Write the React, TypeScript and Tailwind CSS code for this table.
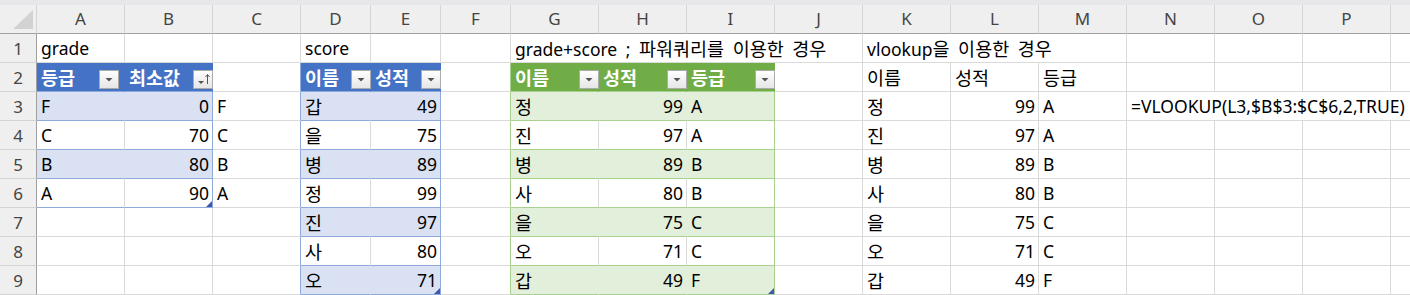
import React from 'react';

type Tbl = { c0: number; c1: number; r0: number; r1: number; green: boolean };

const COLS = ['A', 'B', 'C', 'D', 'E', 'F', 'G', 'H', 'I', 'J', 'K', 'L', 'M', 'N', 'O', 'P', 'Q'];
const WIDE: Record<string, string> = { D: 'w-[70px]', E: 'w-[70px]', F: 'w-[70px]' };

const TABLES: Tbl[] = [
  { c0: 0, c1: 1, r0: 2, r1: 6, green: false },
  { c0: 3, c1: 4, r0: 2, r1: 9, green: false },
  { c0: 6, c1: 8, r0: 2, r1: 9, green: true },
];

const names = ['정', '진', '병', '사', '을', '오', '갑'];
const scores = ['99', '97', '89', '80', '75', '71', '49'];
const grades = ['A', 'A', 'B', 'B', 'C', 'C', 'F'];

const DATA: Record<string, string> = {
  A1: 'grade',
  D1: 'score',
  G1: 'grade+score ; 파워쿼리를 이용한 경우',
  K1: 'vlookup을 이용한 경우',
  A2: '등급',
  B2: '최소값',
  D2: '이름',
  E2: '성적',
  G2: '이름',
  H2: '성적',
  I2: '등급',
  K2: '이름',
  L2: '성적',
  M2: '등급',
  A3: 'F', B3: '0', C3: 'F',
  A4: 'C', B4: '70', C4: 'C',
  A5: 'B', B5: '80', C5: 'B',
  A6: 'A', B6: '90', C6: 'A',
  N3: '=VLOOKUP(L3,$B$3:$C$6,2,TRUE)',
};
['갑', '을', '병', '정', '진', '사', '오'].forEach((n, i) => {
  DATA['D' + (i + 3)] = n;
  DATA['E' + (i + 3)] = ['49', '75', '89', '99', '97', '80', '71'][i];
});
names.forEach((n, i) => {
  DATA['G' + (i + 3)] = n;
  DATA['H' + (i + 3)] = scores[i];
  DATA['I' + (i + 3)] = grades[i];
  DATA['K' + (i + 3)] = n;
  DATA['L' + (i + 3)] = scores[i];
  DATA['M' + (i + 3)] = grades[i];
});

// text that spills over: first column gets the width of the span
const SPAN: Record<string, { w: string; skip: number }> = {
  G1: { w: 'w-[352px]', skip: 3 },
  K1: { w: 'w-[264px]', skip: 2 },
  N3: { w: 'w-[352px]', skip: 3 },
};

const findTable = (r: number, c: number) =>
  TABLES.find((t) => r >= t.r0 && r <= t.r1 && c >= t.c0 && c <= t.c1);

// hangul looks a bit larger than latin in the sheet font
const renderText = (s: string) => (
  <span>
    {s.split(/([가-힣]+)/).map((part, i) =>
      /[가-힣]/.test(part) ? (
        <span key={i} className="text-[18.5px]">
          {part}
        </span>
      ) : (
        part
      ),
    )}
  </span>
);

const FilterBtn = ({ sort, shift }: { sort?: boolean; shift?: boolean }) => (
  <div
    className={
      'absolute top-[7px] h-[19px] w-[20px] border border-[#ababab] bg-gradient-to-b from-white to-[#e6e6e6] ' +
      (shift ? 'right-[5px]' : 'right-[-1px]')
    }
  >
    <svg width="18" height="17" viewBox="0 0 18 17" className="block">
      {sort ? (
        <>
          <polygon points="4,10 10,10 7,13" fill="#555" />
          <path d="M13.5 4 V13" stroke="#555" strokeWidth="1" />
          <path d="M11.5 6 L13.5 3.5 L15.5 6" stroke="#555" strokeWidth="1" fill="none" />
        </>
      ) : (
        <polygon points="5.5,7 12.5,7 9,10.5" fill="#555" />
      )}
    </svg>
  </div>
);

const Handle = () => (
  <svg width="6" height="6" viewBox="0 0 6 6" className="absolute bottom-0 right-0">
    <polygon points="6,0 6,6 0,6" fill="#3f57b0" />
  </svg>
);

const Cell = ({ r, c }: { r: number; c: number }) => {
  const col = COLS[c];
  const key = col + r;
  const text = DATA[key];
  const span = SPAN[key];
  const t = findTable(r, c);
  const nextT = findTable(r, c + 1);
  const num = text !== undefined && /^\d+$/.test(text);

  let bg = 'bg-white text-black';
  let rb = 'border-r-[#dadada]';
  let bb = 'border-b-[#dadada]';
  let head = false;

  if (t) {
    const band = (r - t.r0) % 2 === 1;
    head = r === t.r0;
    const last = c === t.c1;
    if (t.green) {
      bb = 'border-b-[#a9d08e]';
      if (head) {
        bg = 'bg-[#70ad47] text-white font-bold';
        rb = 'border-r-[#70ad47]';
      } else if (band) {
        bg = 'bg-[#e2efda] text-black';
        rb = last ? 'border-r-[#a9d08e]' : 'border-r-[#e2efda]';
      } else {
        rb = last ? 'border-r-[#a9d08e]' : 'border-r-[#dadada]';
      }
    } else {
      bb = 'border-b-[#8ea9db]';
      if (head) {
        bg = 'bg-[#4472c4] text-white font-bold';
        rb = 'border-r-[#4472c4]';
      } else if (band) {
        bg = 'bg-[#d9e1f2] text-black';
        rb = last ? 'border-r-[#8ea9db]' : 'border-r-[#d9e1f2]';
      } else {
        rb = last ? 'border-r-[#8ea9db]' : 'border-r-[#dadada]';
      }
    }
  } else if (nextT && c + 1 === nextT.c0) {
    rb = nextT.green ? 'border-r-[#a9d08e]' : 'border-r-[#8ea9db]';
  }

  const w = span ? span.w : WIDE[col] ?? 'w-[88px]';

  return (
    <div
      className={
        'relative flex h-[29px] shrink-0 items-center whitespace-nowrap border-r border-b pt-[1px] ' +
        [w, bg, rb, bb].join(' ') +
        (num ? ' justify-end pr-[3px]' : ' pl-[4px]')
      }
    >
      {text && renderText(text)}
      {head && <FilterBtn sort={key === 'B2'} shift={key === 'A2'} />}
      {(key === 'B6' || key === 'E9' || key === 'I9') && <Handle />}
    </div>
  );
};

const Row = ({ r }: { r: number }) => {
  const cells: React.ReactNode[] = [];
  for (let c = 0; c < COLS.length; c++) {
    cells.push(<Cell key={c} r={r} c={c} />);
    const span = SPAN[COLS[c] + r];
    if (span) c += span.skip;
  }
  return (
    <div className="flex">
      <div className="flex h-[29px] w-[37px] shrink-0 items-center justify-center border-r border-b border-r-[#9f9f9f] border-b-[#d4d4d4] bg-[#efefef] pt-[1px] text-[17px] text-[#444]">
        {r}
      </div>
      {cells}
    </div>
  );
};

export default function App() {
  return (
    <div
      className="h-[295px] w-[1410px] overflow-hidden bg-white text-[17.5px] [word-spacing:4px]"
      style={{ fontFamily: '"Noto Sans", "Noto Sans CJK KR", sans-serif' }}
    >
      <div className="h-[5px] bg-[#e7e7ea]" />
      <div className="flex">
        <div className="relative h-[29px] w-[37px] shrink-0 border-r border-b border-r-[#d4d4d4] border-b-[#a0a0a0] bg-[#efefef]">
          <svg width="36" height="28" viewBox="0 0 36 28" className="absolute left-0 top-0">
            <polygon points="33,5 33,24 13,24" fill="#d2d2d2" />
          </svg>
        </div>
        {COLS.map((l) => (
          <div
            key={l}
            className={
              'flex h-[29px] shrink-0 items-center justify-center border-r border-b border-r-[#d4d4d4] border-b-[#a0a0a0] bg-[#efefef] text-[17px] text-[#444] ' +
              (WIDE[l] ?? 'w-[88px]')
            }
          >
            {l === 'Q' ? '' : l}
          </div>
        ))}
      </div>
      {[1, 2, 3, 4, 5, 6, 7, 8, 9].map((r) => (
        <Row key={r} r={r} />
      ))}
    </div>
  );
}
